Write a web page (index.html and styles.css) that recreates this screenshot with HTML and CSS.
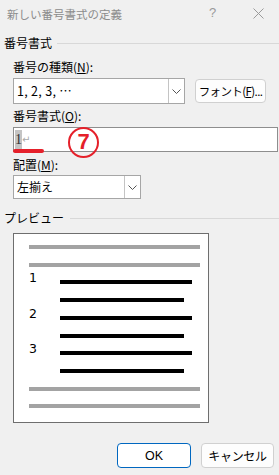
FILE: index.html
```html
<!DOCTYPE html>
<html lang="ja">
<head>
<meta charset="utf-8">
<link rel="stylesheet" href="styles.css">
</head>
<body>
<div class="dialog">
  <div class="titlebar">
    <span class="title">新しい番号書式の定義</span>
    <span class="help">?</span>
    <svg class="close" width="11" height="11" viewBox="0 0 11 11"><path d="M0.5 0.5 L10.5 10.5 M10.5 0.5 L0.5 10.5" stroke="#9a9a9a" stroke-width="1" fill="none"/></svg>
  </div>

  <div class="group-head"><span>番号書式</span><div class="rule"></div></div>

  <div class="indent">
    <div class="label l1">番号の種類(<u>N</u>):</div>
    <div class="row r1">
      <div class="combo combo-wide">
        <span class="combo-text">1, 2, 3, …</span>
        <span class="drop"><svg width="9" height="5" viewBox="0 0 9 5"><path d="M0.5 0.5 L4.5 4.5 L8.5 0.5" stroke="#555" fill="none"/></svg></span>
      </div>
      <div class="btn font-btn">フォント(<u>F</u>)...</div>
    </div>

    <div class="label l2">番号書式(<u>O</u>):</div>
    <div class="input">
      <span class="sel">1</span><span class="ret">↵</span>
      <div class="red-under"></div>
      <div class="badge">7</div>
    </div>

    <div class="label l3">配置(<u>M</u>):</div>
    <div class="combo combo-small">
      <span class="combo-text">左揃え</span>
      <span class="drop"><svg width="9" height="5" viewBox="0 0 9 5"><path d="M0.5 0.5 L4.5 4.5 L8.5 0.5" stroke="#555" fill="none"/></svg></span>
    </div>
  </div>

  <div class="group-head gh2"><span>プレビュー</span><div class="rule"></div></div>

  <div class="indent">
    <div class="preview">
      <div class="pv-row"><div class="gline"></div></div>
      <div class="pv-row"><div class="gline"></div></div>
      <div class="pv-row"><span class="num">1</span><div class="bline long"></div></div>
      <div class="pv-row"><span class="num"></span><div class="bline short"></div></div>
      <div class="pv-row"><span class="num">2</span><div class="bline long"></div></div>
      <div class="pv-row"><span class="num"></span><div class="bline short"></div></div>
      <div class="pv-row"><span class="num">3</span><div class="bline long"></div></div>
      <div class="pv-row"><span class="num"></span><div class="bline short"></div></div>
      <div class="pv-row"><div class="gline"></div></div>
      <div class="pv-row"><div class="gline"></div></div>
    </div>
  </div>

  <div class="buttons">
    <div class="btn ok">OK</div>
    <div class="btn cancel">キャンセル</div>
  </div>
</div>
</body>
</html>
```

FILE: styles.css
```css
html, body {
  margin: 0;
  padding: 0;
  background: #f0f0f0;
}
body {
  width: 279px;
  height: 475px;
  overflow: hidden;
  font-family: "Noto Sans CJK JP", "Noto Sans", sans-serif;
  font-size: 12px;
  color: #000;
}
u { text-decoration: underline; text-underline-offset: 1px; }

.dialog { display: flex; flex-direction: column; }

.titlebar {
  height: 29px;
  display: flex;
  align-items: center;
  padding-left: 7px;
  position: relative;
}
.title {
  font-size: 11.5px;
  color: #8c8c8c;
  line-height: 16px;
  margin-top: -1px;
}
.help {
  position: absolute;
  left: 209px;
  top: 5px;
  font-family: "Liberation Sans", sans-serif;
  font-size: 13px;
  color: #9a9a9a;
  line-height: 16px;
}
.close { position: absolute; left: 253px; top: 8px; }

.group-head {
  margin-top: 6px;
  height: 16px;
  line-height: 16px;
  display: flex;
  align-items: center;
  padding-left: 4px;
}
.group-head .rule {
  flex: 1;
  height: 1px;
  background: #d8d8d8;
  margin-left: 5px;
}
.gh2 { margin-top: 11px; }
.gh2 .rule { margin-left: 6px; }

.indent { padding-left: 13px; display: flex; flex-direction: column; align-items: flex-start; }

.label { height: 16px; line-height: 16px; white-space: nowrap; }
.l1 { margin-top: 8px; }
.l2 { margin-top: 4px; }
.l3 { margin-top: 5px; }

.row { display: flex; align-items: flex-start; margin-top: 3px; }

.combo {
  box-sizing: border-box;
  background: #fff;
  border: 1px solid #a6a6a6;
  display: flex;
  align-items: center;
}
.combo-wide { width: 172px; height: 26px; }
.combo-small { width: 128px; height: 24px; margin-top: 2px; }
.combo-text {
  flex: 1;
  padding-left: 3px;
  line-height: 16px;
  white-space: nowrap;
}
.combo-wide .combo-text { font-size: 12.5px; letter-spacing: 0.3px; }
.drop {
  align-self: stretch;
  width: 15px;
  border-left: 1px solid #c4c4c4;
  display: flex;
  align-items: center;
  justify-content: center;
}

.btn {
  box-sizing: border-box;
  background: #fdfdfd;
  border: 1px solid #d0d0d0;
  border-radius: 4px;
  display: flex;
  align-items: center;
  justify-content: center;
  line-height: 16px;
  white-space: nowrap;
}
.font-btn {
  width: 71px;
  height: 24px;
  margin-left: 10px;
  margin-top: 1px;
  font-size: 11.5px;
  letter-spacing: -0.6px;
}

.input {
  position: relative;
  box-sizing: border-box;
  margin-top: 3px;
  width: 265px;
  height: 25px;
  background: #fff;
  border: 1px solid #8e8e8e;
  display: flex;
  align-items: center;
  padding-left: 1px;
}
.sel {
  background: #c4c4c4;
  width: 7px;
  height: 20px;
  line-height: 20px;
  font-family: "Liberation Serif", serif;
  font-size: 14px;
  color: #333;
  text-align: center;
}
.ret {
  color: #a8a8a8;
  font-family: "DejaVu Sans", sans-serif;
  font-size: 10px;
  line-height: 20px;
}
.red-under {
  position: absolute;
  left: -1px;
  top: 21px;
  width: 31px;
  height: 4px;
  border-radius: 2px;
  background: #e5202a;
}
.badge {
  position: absolute;
  left: 54px;
  top: -1px;
  box-sizing: border-box;
  width: 31px;
  height: 31px;
  border: 2.5px solid #e5202a;
  border-radius: 50%;
  color: #e5202a;
  font-family: "Liberation Sans", sans-serif;
  font-weight: bold;
  font-size: 22px;
  line-height: 26px;
  text-align: center;
}

.preview {
  box-sizing: border-box;
  margin-top: 7px;
  width: 196px;
  height: 190px;
  background: #fff;
  border: 1px solid #6e6e6e;
  padding-top: 11px;
  padding-left: 15px;
  display: flex;
  flex-direction: column;
}
.pv-row {
  height: 18px;
  display: flex;
  align-items: flex-start;
}
.gline { width: 171px; height: 4px; background: #a3a3a3; }
.num {
  width: 31px;
  height: 12px;
  margin-top: -8px;
  margin-bottom: -4px;
  line-height: 12px;
  font-family: "DejaVu Sans", sans-serif;
  font-size: 12.5px;
  color: #000;
}
.bline { height: 4px; background: #000; }
.long { width: 132px; }
.short { width: 124px; }

.buttons {
  display: flex;
  justify-content: flex-end;
  gap: 10px;
  padding-right: 5px;
  margin-top: 20px;
}
.ok {
  width: 74px;
  height: 25px;
  background: #fff;
  border: 1.5px solid #0067c0;
  font-family: "Liberation Sans", "Noto Sans CJK JP", sans-serif;
  font-size: 12.5px;
}
.cancel {
  width: 73px;
  height: 25px;
  letter-spacing: -0.3px;
}
```
